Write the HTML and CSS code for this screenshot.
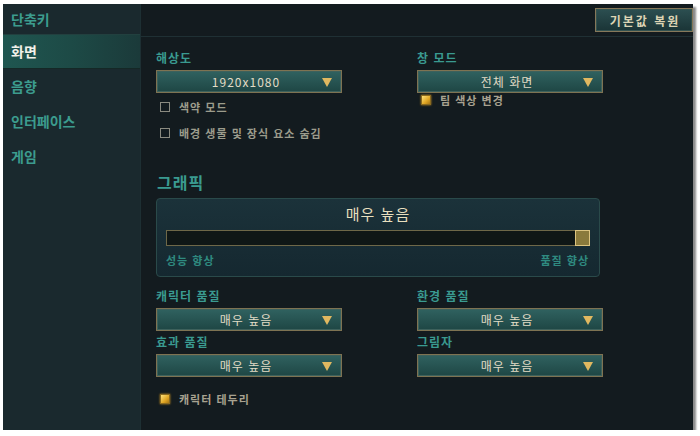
FILE: index.html
```html
<!DOCTYPE html>
<html lang="ko">
<head>
    <meta charset="UTF-8">
    <meta name="viewport" content="width=device-width, initial-scale=1.0">
    <title>설정 - 화면</title>
    <link rel="stylesheet" href="styles.css">
</head>
<body>
    <div class="window">
        <nav class="sidebar">
            <div class="nav-item">단축키</div>
            <div class="nav-item active">화면</div>
            <div class="nav-item">음향</div>
            <div class="nav-item">인터페이스</div>
            <div class="nav-item">게임</div>
        </nav>

        <main class="main">
            <div class="topbar">
                <button class="reset-btn">기본값 복원</button>
            </div>

            <div class="content">
                <div class="grid top-grid">
                    <div class="field">
                        <div class="label">해상도</div>
                        <div class="dropdown"><span>1920x1080</span><i class="arrow"></i></div>
                        <div class="check first"><span class="box"></span>색약 모드</div>
                        <div class="check"><span class="box"></span>배경 생물 및 장식 요소 숨김</div>
                    </div>
                    <div class="field">
                        <div class="label">창 모드</div>
                        <div class="dropdown"><span>전체 화면</span><i class="arrow"></i></div>
                        <div class="check tight"><span class="box on"></span>팀 색상 변경</div>
                    </div>
                </div>

                <h2 class="section-title">그래픽</h2>

                <div class="panel">
                    <div class="panel-title">매우 높음</div>
                    <div class="track"><span class="thumb"></span></div>
                    <div class="track-labels">
                        <span>성능 향상</span>
                        <span>품질 향상</span>
                    </div>
                </div>

                <div class="grid quality-grid">
                    <div class="field">
                        <div class="label">캐릭터 품질</div>
                        <div class="dropdown"><span>매우 높음</span><i class="arrow"></i></div>
                    </div>
                    <div class="field">
                        <div class="label">환경 품질</div>
                        <div class="dropdown"><span>매우 높음</span><i class="arrow"></i></div>
                    </div>
                    <div class="field">
                        <div class="label">효과 품질</div>
                        <div class="dropdown"><span>매우 높음</span><i class="arrow"></i></div>
                    </div>
                    <div class="field">
                        <div class="label">그림자</div>
                        <div class="dropdown"><span>매우 높음</span><i class="arrow"></i></div>
                    </div>
                </div>

                <div class="check outline-check"><span class="box on"></span>캐릭터 테두리</div>
            </div>
        </main>
    </div>
</body>
</html>
```

FILE: styles.css
```css
body {
    margin: 0;
    padding: 4px 0 0 3px;
    background: #ffffff;
    font-family: "Noto Sans CJK KR", "Noto Sans", sans-serif;
}

.window {
    display: flex;
    width: 690px;
    height: 426px;
    background: #131b1f;
    box-shadow: 3px 3px 2px #8a8a8a;
    overflow: hidden;
}

/* left menu */
.sidebar {
    width: 137px;
    flex-shrink: 0;
    background: #1a292e;
    border-right: 1px solid #1d2f33;
}

.nav-item {
    height: 35px;
    line-height: 35px;
    padding-left: 8px;
    font-size: 14px;
    font-weight: bold;
    color: #3c9c8e;
}

.nav-item:first-child {
    height: 30px;
    line-height: 30px;
}

.nav-item.active {
    color: #f2f2ea;
    background: linear-gradient(90deg, #1f5650 0%, #1d4a46 50%, #1b3a3a 100%);
    box-shadow: inset 0 1px 0 #22403f, inset 0 -1px 0 #152826;
}

/* right side */
.main {
    flex: 1;
    display: flex;
    flex-direction: column;
}

.topbar {
    height: 32px;
    border-bottom: 1px solid #1f3034;
    display: flex;
    justify-content: flex-end;
    align-items: flex-start;
}

.reset-btn {
    margin-top: 4px;
    width: 98px;
    height: 24px;
    padding: 0 0 0 2px;
    font-family: inherit;
    font-size: 12px;
    font-weight: bold;
    letter-spacing: 2px;
    color: #ddd4b4;
    background: linear-gradient(#2c4f51, #1a3436);
    border: 1px solid #86785a;
    box-shadow: inset 0 0 0 1px #33524f;
}

.content {
    padding: 13px 0 0 15px;
}

.grid {
    display: grid;
    grid-template-columns: 186px 186px;
    column-gap: 75px;
}

.label {
    height: 16px;
    line-height: 16px;
    font-size: 12px;
    font-weight: bold;
    letter-spacing: 1px;
    color: #3a9a90;
    margin-bottom: 4px;
}

.dropdown {
    position: relative;
    height: 21px;
    line-height: 21px;
    text-align: center;
    font-size: 12px;
    letter-spacing: 1px;
    color: #e2dcc6;
    background: linear-gradient(#306260, #1e4644);
    border: 1px solid #7e7352;
    box-shadow: inset 0 0 0 1px #3d615c;
}

.dropdown span {
    margin-right: 6px;
}

.arrow {
    position: absolute;
    right: 9px;
    top: 7px;
    width: 0;
    height: 0;
    border-left: 5px solid transparent;
    border-right: 5px solid transparent;
    border-top: 9px solid #e0b860;
}

.check {
    display: flex;
    align-items: center;
    height: 14px;
    font-size: 11px;
    font-weight: bold;
    letter-spacing: 1px;
    color: #9c9c8c;
    padding-left: 4px;
    margin-top: 12px;
}

.check.first {
    margin-top: 7px;
}

.check.tight {
    margin-top: 0;
    color: #a8a290;
}

.box {
    width: 8px;
    height: 8px;
    border: 1px solid #8a8a80;
    margin-right: 9px;
    flex-shrink: 0;
}

.box.on {
    border-color: #8a6a20;
    background: linear-gradient(135deg, #ffe27a, #e0a624 60%, #a87614);
    box-shadow: 0 0 2px #c89020;
}

.section-title {
    margin: 32px 0 0 1px;
    height: 20px;
    line-height: 20px;
    font-size: 16px;
    font-weight: bold;
    letter-spacing: 1px;
    color: #3a9a90;
}

/* graphics slider */
.panel {
    box-sizing: border-box;
    width: 444px;
    margin-top: 6px;
    padding: 5px 9px 9px;
    border: 1px solid #2a4a4a;
    border-radius: 4px;
    background: linear-gradient(#1b323a, #152830);
}

.panel-title {
    height: 20px;
    line-height: 20px;
    text-align: center;
    font-size: 15px;
    letter-spacing: 1px;
    color: #e8dfbe;
}

.track {
    position: relative;
    margin-top: 6px;
    height: 14px;
    background: #0f1716;
    border: 1px solid #6e6848;
}

.thumb {
    position: absolute;
    right: -1px;
    top: -1px;
    width: 13px;
    height: 14px;
    background: #8a7a3c;
    border: 1px solid #dcc480;
}

.track-labels {
    display: flex;
    justify-content: space-between;
    margin-top: 7px;
    height: 14px;
    line-height: 14px;
    font-size: 11px;
    font-weight: bold;
    letter-spacing: 1px;
    color: #2f8a80;
    padding-right: 1px;
}

.quality-grid {
    margin-top: 11px;
    row-gap: 3px;
}

.outline-check {
    margin-top: 15px;
    color: #a8a290;
}
```
